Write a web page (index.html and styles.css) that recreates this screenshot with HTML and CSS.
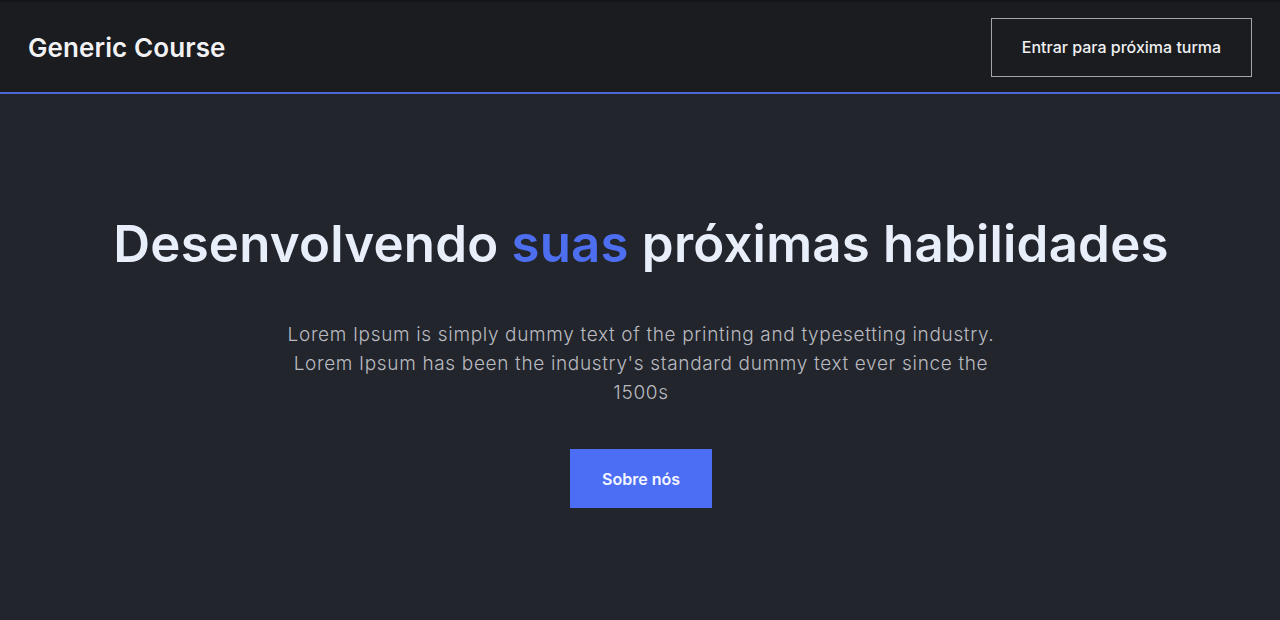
FILE: index.html
```html
<!DOCTYPE html>
<html lang="pt">
<head>
<meta charset="utf-8">
<title>Generic Course</title>
<link rel="stylesheet" href="styles.css">
</head>
<body>
<header class="header">
  <div class="logo">Generic Course</div>
  <a class="btn-outline" href="#">Entrar para próxima turma</a>
</header>
<main class="hero">
  <h1 class="title">Desenvolvendo <span class="accent">suas</span> próximas habilidades</h1>
  <p class="lead">Lorem Ipsum is simply dummy text of the printing and typesetting industry. Lorem Ipsum has been the industry's standard dummy text ever since the 1500s</p>
  <a class="btn-primary" href="#">Sobre nós</a>
</main>
</body>
</html>
```
FILE: styles.css
```css
* { box-sizing: border-box; }
html, body { margin: 0; padding: 0; }
body {
  background: #22252b;
  font-family: Inter, "Noto Sans", sans-serif;
  color: #e8ecf8;
  height: 620px;
  overflow: hidden;
}
.header {
  height: 94px;
  background: #1a1c1f;
  border-top: 2px solid #121417;
  border-bottom: 2px solid #4f66d8;
  display: flex;
  align-items: center;
  justify-content: space-between;
  padding: 0 28px 0 28px;
}
.logo {
  font-size: 26px;
  font-weight: 600;
  color: #f2f2f4;
  letter-spacing: 0.1px;
}
.btn-outline {
  display: flex;
  align-items: center;
  justify-content: center;
  width: 261px;
  height: 59px;
  border: 1px solid #a4a6aa;
  color: #f0f0f2;
  text-decoration: none;
  font-size: 16px;
  font-weight: 500;
  margin-top: 0;
}
.hero {
  display: flex;
  flex-direction: column;
  align-items: center;
  text-align: center;
  padding-top: 118px;
  padding-left: 2px;
}
.title {
  margin: 0;
  font-size: 51px;
  font-weight: 600;
  color: #e9eefb;
  letter-spacing: 0.2px;
  line-height: 64px;
}
.accent { color: #4e6ef0; }
.lead {
  margin: 44px 0 0 0;
  width: 730px;
  font-size: 19px;
  line-height: 29px;
  font-weight: 300;
  letter-spacing: 0.66px;
  color: #b9bac0;
}
.btn-primary {
  margin-top: 42px;
  display: flex;
  align-items: center;
  justify-content: center;
  width: 142px;
  height: 59px;
  background: #4c6ef5;
  color: #f4f6ff;
  text-decoration: none;
  font-size: 16px;
  font-weight: 600;
}
```
